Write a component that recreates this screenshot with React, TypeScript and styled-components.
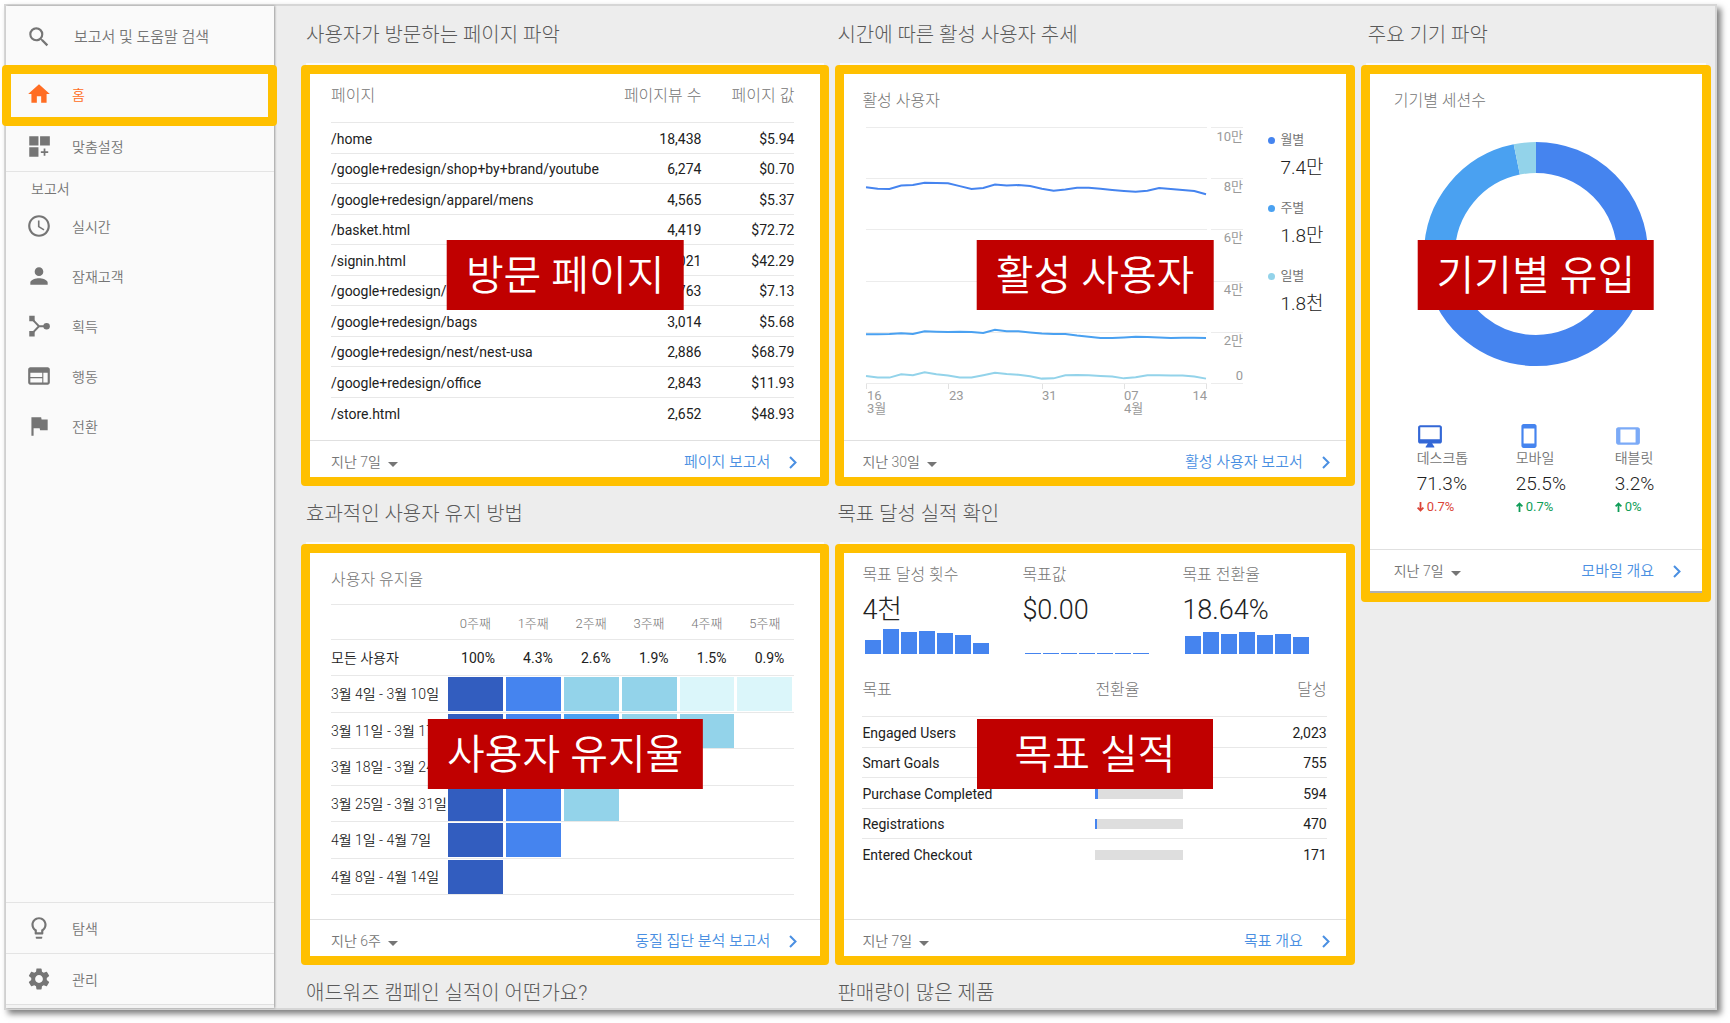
import React from "react";
import styled, { createGlobalStyle } from "styled-components";
import {
  MdSearch,
  MdHome,
  MdSchedule,
  MdPerson,
  MdWeb,
  MdFlag,
  MdLightbulbOutline,
  MdSettings,
  MdSmartphone,
  MdTablet,
} from "react-icons/md";

const color = {
  highlight: "#ffc000",
  tag: "#c00000",
  orange: "#ff6d23",
  muted: "#757575",
  line: "#e8e8e8",
  link: "#4a8fe2",
  navy: "#325dbf",
  blue: "#4584ef",
  sky: "#4aa1f1",
  pale: "#93d3ea",
  ice: "#dbf6fa",
};

const GlobalStyle = createGlobalStyle`
  *, *::before, *::after { box-sizing: border-box; }
  body {
    margin: 0;
    background: #fff;
    color: #212121;
    font-family: Roboto, "Noto Sans CJK KR", sans-serif;
    font-size: 14px;
  }
  h2, h3, p, ul, dl, dd { margin: 0; padding: 0; font-weight: inherit; }
  ul { list-style: none; }
  a { color: inherit; text-decoration: none; }
  svg { display: block; flex-shrink: 0; }
`;

/* ---------- frame ---------- */

const Page = styled.div`
  padding: 4px 13px 13px 4px;
`;

const Frame = styled.div`
  display: flex;
  min-height: calc(100vh - 17px);
  border: 2px solid #d6d6d6;
  background: #ededed;
  box-shadow: 4px 4px 6px rgba(0, 0, 0, 0.5);
`;

/* ---------- sidebar ---------- */

const Sidebar = styled.aside`
  position: relative;
  z-index: 1;
  display: flex;
  flex-direction: column;
  flex: 0 0 268px;
  background: #fafafa;
  color: ${color.muted};
  font-weight: 350;
  box-shadow: 1px 0 2px rgba(0, 0, 0, 0.35);
`;

const SearchBox = styled.label`
  display: flex;
  align-items: center;
  gap: 22px;
  height: 62px;
  padding-left: 20px;
`;

const SearchInput = styled.input`
  width: 160px;
  padding: 0;
  border: 0;
  outline: 0;
  background: none;
  color: ${color.muted};
  font: inherit;
  font-size: 15px;
  &::placeholder {
    color: ${color.muted};
    opacity: 1;
  }
`;

const NavLink = styled.a<{ $height: number; $active?: boolean }>`
  position: relative;
  display: flex;
  align-items: center;
  gap: 20px;
  height: ${(p) => p.$height}px;
  padding-left: 20px;
  color: ${(p) => (p.$active ? color.orange : "inherit")};
`;

const NavHighlight = styled.span`
  position: absolute;
  inset: -3px -3px -6px -4px;
  border: 9px solid ${color.highlight};
  border-radius: 4px;
`;

const NavGroup = styled.ul`
  border-bottom: 1px solid #e4e4e4;
`;

const NavHeading = styled.h2`
  padding: 5px 0 0 25px;
  font-size: 14px;
  line-height: 24px;
`;

const NavBottom = styled.ul`
  margin-top: auto;
  li {
    border-top: 1px solid #e4e4e4;
  }
`;

const NavEdge = styled.div`
  height: 4px;
  border-top: 1px solid #e0e0e0;
  background: #f3f3f3;
`;

/* ---------- dashboard grid ---------- */

const Main = styled.main`
  display: grid;
  grid-template-columns: 528fr 519fr 350fr;
  gap: 6px;
  flex: 1;
  min-width: 0;
  padding: 1px 4px 0 27px;
`;

const Column = styled.div<{ $inset: number }>`
  --inset: ${(p) => p.$inset}px;
  min-width: 0;
`;

const Title = styled.h2`
  padding: 14px 0 16px var(--inset);
  color: #5a5a5a;
  font-size: 20px;
  font-weight: 300;
  line-height: 28px;
  white-space: nowrap;
  &:last-child {
    padding-bottom: 0;
  }
`;

const Card = styled.section<{ $left: number; $right: number; $tall?: boolean }>`
  --left: ${(p) => p.$left}px;
  --right: ${(p) => p.$right}px;
  position: relative;
  display: flex;
  flex-direction: column;
  min-height: ${(p) => (p.$tall ? 537 : 421)}px;
  border: 9px solid ${color.highlight};
  border-radius: 4px;
  background: #fff;
  box-shadow: 0 -7px 0 -5px #fafafa;
`;

const CardBody = styled.div`
  flex: 1;
  padding: 0 var(--right) 0 var(--left);
`;

const CardTitle = styled.h3<{ $height: number }>`
  height: ${(p) => p.$height}px;
  padding-top: 17px;
  color: ${color.muted};
  font-size: 16px;
  font-weight: 300;
  line-height: 20px;
`;

const Tag = styled.div`
  position: absolute;
  top: 166px;
  left: 50%;
  min-width: 236px;
  height: 70px;
  padding: 0 19px;
  transform: translateX(-50%);
  background: ${color.tag};
  color: #fff;
  font-size: 41px;
  font-weight: 350;
  line-height: 72px;
  text-align: center;
  white-space: nowrap;
`;

const Footer = styled.footer<{ $edge?: boolean }>`
  display: flex;
  align-items: center;
  justify-content: space-between;
  padding: 11px calc(var(--right) - 3px) ${(p) => (p.$edge ? 10 : 5)}px var(--left);
  border-top: 1px solid #e0e0e0;
  border-bottom: ${(p) => (p.$edge ? "2px solid #b0b0b0" : "0")};
  font-weight: 350;
  line-height: 20px;
`;

const Period = styled.label`
  display: flex;
  align-items: center;
  gap: 7px;
  color: ${color.muted};
  svg {
    margin-top: 5px;
  }
`;

const PeriodSelect = styled.select`
  height: 20px;
  padding: 0;
  border: 0;
  appearance: none;
  field-sizing: content;
  background: none;
  color: inherit;
  font: inherit;
`;

const ReportLink = styled.a`
  display: flex;
  align-items: center;
  gap: 19px;
  color: ${color.link};
  font-size: 15px;
`;

/* ---------- tables ---------- */

const DataTable = styled.table<{ $offset?: number }>`
  width: 100%;
  margin-top: ${(p) => p.$offset ?? 0}px;
  border-spacing: 0;
  table-layout: fixed;
  line-height: 20px;

  th,
  td {
    padding: 0;
    border-bottom: 1px solid ${color.line};
    text-align: right;
    white-space: nowrap;
  }
  th:first-child,
  td:first-child,
  th.bar {
    text-align: left;
  }
  thead th {
    height: 49px;
    padding-top: 12px;
    color: ${color.muted};
    font-size: 16px;
    font-weight: 300;
    vertical-align: top;
  }
  tbody td {
    padding-top: 1px;
  }
  tbody tr {
    height: 30px;
  }
  tbody tr:nth-child(odd) {
    height: 31px;
  }
  tbody tr:last-child > * {
    border-bottom: 0;
  }
`;

const Track = styled.div`
  width: 88px;
  height: 10px;
  background: #dedede;
`;

const Fill = styled.div`
  height: 100%;
  background: ${color.blue};
`;

const CohortTable = styled.table`
  width: 100%;
  border-top: 1px solid ${color.line};
  border-spacing: 0;
  table-layout: fixed;
  line-height: 20px;

  th,
  td {
    padding: 0;
    border-bottom: 1px solid ${color.line};
    font-weight: 400;
    text-align: right;
    white-space: nowrap;
  }
  thead tr {
    height: 35px;
  }
  thead th {
    padding: 3px 14px 0 0;
    color: ${color.muted};
    font-size: 13px;
    font-weight: 300;
  }
  tbody tr {
    height: 37px;
  }
  tbody tr:nth-child(odd) {
    height: 36px;
  }
  tbody th {
    overflow: hidden;
    font-weight: 350;
    text-align: left;
  }
`;

const Share = styled.td`
  && {
    padding-right: 10px;
  }
`;

const Heat = styled.div<{ $tone: string }>`
  height: 34px;
  margin: 0 2px 0 1px;
  background: ${(p) => p.$tone};
`;

/* ---------- active users ---------- */

const ChartRow = styled.div`
  display: flex;
  gap: 25px;
`;

const Legend = styled.dl`
  display: flex;
  flex-direction: column;
  gap: 16px;
  padding-top: 10px;
`;

const LegendLabel = styled.dt<{ $tone: string }>`
  display: flex;
  align-items: center;
  gap: 5px;
  margin-bottom: 4px;
  color: ${color.muted};
  font-size: 13px;
  line-height: 20px;
  &::before {
    content: "";
    width: 7px;
    height: 7px;
    border-radius: 50%;
    background: ${(p) => p.$tone};
  }
`;

const LegendValue = styled.dd`
  padding-left: 12px;
  font-size: 19px;
  font-weight: 300;
  line-height: 28px;
`;

/* ---------- devices ---------- */

const DonutBox = styled.div`
  display: flex;
  justify-content: center;
`;

const Devices = styled.ul`
  display: grid;
  grid-template-columns: 99px 99px auto;
  margin: 56px 0 0 23px;
`;

const DeviceIcon = styled.div<{ $tone: string }>`
  color: ${(p) => p.$tone};
`;

const DeviceName = styled.p`
  color: ${color.muted};
  font-weight: 350;
  line-height: 18px;
`;

const DeviceShare = styled.p`
  margin: 4px 0 1px;
  font-size: 19px;
  font-weight: 300;
  line-height: 26px;
`;

const Delta = styled.p<{ $up: boolean }>`
  display: flex;
  align-items: center;
  gap: 3px;
  color: ${(p) => (p.$up ? "#0f9d58" : "#db4437")};
  font-size: 13px;
  line-height: 18px;
`;

/* ---------- goals ---------- */

const Stats = styled.div`
  display: grid;
  grid-template-columns: 160px 160px auto;
  padding-top: 12px;
`;

const StatLabel = styled.p`
  color: ${color.muted};
  font-size: 16px;
  font-weight: 300;
  line-height: 20px;
`;

const StatValue = styled.p`
  margin-top: 10px;
  font-size: 27px;
  font-weight: 300;
  line-height: 30px;
`;

const Bars = styled.div`
  display: flex;
  align-items: flex-end;
  gap: 2px;
  height: 29px;
  padding-left: 3px;
`;

const Bar = styled.div`
  width: 16px;
  background: ${color.blue};
`;

/* ---------- drawings ---------- */

const CustomizeIcon = () => (
  <svg width="26" height="26" viewBox="0 0 24 24" fill="currentColor" aria-hidden="true">
    <path d="M3 3h8.500v8.500H3zM13 3h9v8.500h-9zM3 13.200h8.500V22H3zM16.300 14.200h1.600v2.600h2.600v1.600h-2.600V21h-1.600v-2.600h-2.600v-1.600h2.600z" />
  </svg>
);

const AcquisitionIcon = () => (
  <svg width="26" height="26" viewBox="0 0 24 24" aria-hidden="true">
    <path d="M5 5l7 7.200L5 19.500M12 12.200h7" fill="none" stroke="currentColor" strokeWidth="1.800" />
    <path d="M3 2.500h5v5H3zM3 16.700h5v5H3z" fill="currentColor" />
    <circle cx="19" cy="12.200" r="3" fill="currentColor" />
  </svg>
);

const DesktopIcon = ({ size }: { size: number }) => (
  <svg width={size} height={size} viewBox="0 0 24 24" fill="currentColor" aria-hidden="true">
    <path
      fillRule="evenodd"
      d="M21 2H3c-1.100 0-2 .9-2 2v13c0 1.100.9 2 2 2h7l-2 3v.5h8V22l-2-3h7c1.100 0 2-.9 2-2V4c0-1.100-.9-2-2-2zM3 4h18v11H3z"
    />
  </svg>
);

const Caret = () => (
  <svg width="10" height="5" viewBox="0 0 10 5" fill="currentColor" aria-hidden="true">
    <path d="M0 0h10L5 5z" />
  </svg>
);

const Chevron = () => (
  <svg width="8" height="13" viewBox="0 0 8 13" fill="none" stroke="currentColor" strokeWidth="2" aria-hidden="true">
    <path d="M1 1l5.500 5.500L1 12" />
  </svg>
);

const DeltaArrow = ({ up }: { up: boolean }) => (
  <svg width="7" height="10" viewBox="0 0 7 10" fill="none" stroke="currentColor" strokeWidth="1.800" aria-hidden="true">
    {up ? <path d="M3.500 10V1.500M.6 4.300l2.900-2.900 2.900 2.900" /> : <path d="M3.500 0v8.500M.6 5.700l2.900 2.900 2.900-2.900" />}
  </svg>
);

const monthly = [76.9, 76.3, 76.2, 77.5, 77.7, 78.6, 78.5, 78.4, 77.3, 76.2, 76.6, 77.9, 77.5, 77.7, 77.3, 76.3, 75.5, 76, 76.7, 76.7, 76.3, 75.8, 75.4, 75.1, 75.5, 76.6, 76.2, 75.8, 75.4, 74.1];
const weekly = [19.4, 19.4, 19.5, 19.8, 19.5, 20.6, 20.4, 20.3, 20.4, 20.3, 19.9, 21.2, 20.6, 20.6, 20.1, 19.7, 19.5, 19.5, 18.9, 18.5, 18, 18, 18.2, 18.5, 18.4, 18.2, 18, 18.1, 18.1, 18];
const daily = [3.1, 2.5, 2.5, 3.8, 3.4, 4.6, 3.8, 3.3, 2.5, 2.5, 3.4, 4.4, 3.9, 3.6, 3, 2.1, 2.2, 3.4, 3.5, 3.4, 3.1, 2.9, 2.2, 2.6, 3.4, 3.4, 3.3, 3.3, 2.9, 2.1];

const series = [
  { name: "월별", value: "7.4만", tone: color.blue, points: monthly },
  { name: "주별", value: "1.8만", tone: color.sky, points: weekly },
  { name: "일별", value: "1.8천", tone: color.pale, points: daily },
];

const plot = { left: 4, right: 344, top: 8, bottom: 264 };
const plotX = (i: number) => plot.left + (i * (plot.right - plot.left)) / 29;
const plotY = (v: number) => plot.bottom - (v * (plot.bottom - plot.top)) / 100;

const ActiveUsersChart = () => (
  <svg width="381" height="300" viewBox="0 0 381 300" role="img" aria-label="활성 사용자 추세">
    {[100, 80, 60, 40, 20, 0].map((v) => (
      <path
        key={v}
        d={`M${plot.left} ${Math.round(plotY(v)) - 0.5}H${plot.right + 1}M${plot.right + 5} ${Math.round(plotY(v)) - 0.5}H381`}
        stroke="#ececec"
      />
    ))}
    {[0, 7, 15, 22, 29].map((i) => (
      <path key={i} d={`M${Math.round(plotX(i)) + 0.5} ${plot.bottom}v5`} stroke="#e2e2e2" />
    ))}
    {series.map((s) => (
      <polyline
        key={s.name}
        points={s.points.map((v, i) => `${plotX(i)},${plotY(v)}`).join(" ")}
        fill="none"
        stroke={s.tone}
        strokeWidth="2"
      />
    ))}
    <g fill="#9a9a9a" fontSize="13" textAnchor="end">
      <text x="381" y="21">10만</text>
      <text x="381" y="71">8만</text>
      <text x="381" y="122">6만</text>
      <text x="381" y="174">4만</text>
      <text x="381" y="225">2만</text>
      <text x="381" y="260">0</text>
      <text x="345" y="280">14</text>
    </g>
    <g fill="#9a9a9a" fontSize="13">
      <text x="5" y="280">16</text>
      <text x="5" y="293">3월</text>
      <text x="87" y="280">23</text>
      <text x="180" y="280">31</text>
      <text x="262" y="280">07</text>
      <text x="262" y="293">4월</text>
    </g>
  </svg>
);

const slices = [
  { share: 71.3, tone: color.blue },
  { share: 25.5, tone: color.sky },
  { share: 3.2, tone: color.pale },
];

const DeviceDonut = () => {
  let start = 0;
  return (
    <svg width="226" height="226" viewBox="0 0 226 226" role="img" aria-label="기기별 세션수">
      <g fill="none" strokeWidth="31" transform="rotate(-90 113 113)">
        {slices.map((s) => {
          const offset = -start;
          start += s.share;
          return (
            <circle
              key={s.tone}
              cx="113"
              cy="113"
              r="96.500"
              pathLength="100"
              stroke={s.tone}
              strokeDasharray={`${s.share} ${100 - s.share}`}
              strokeDashoffset={offset}
            />
          );
        })}
      </g>
    </svg>
  );
};

/* ---------- data ---------- */

const pages = [
  ["/home", "18,438", "$5.94"],
  ["/google+redesign/shop+by+brand/youtube", "6,274", "$0.70"],
  ["/google+redesign/apparel/mens", "4,565", "$5.37"],
  ["/basket.html", "4,419", "$72.72"],
  ["/signin.html", "4,021", "$42.29"],
  ["/google+redesign/apparel", "3,763", "$7.13"],
  ["/google+redesign/bags", "3,014", "$5.68"],
  ["/google+redesign/nest/nest-usa", "2,886", "$68.79"],
  ["/google+redesign/office", "2,843", "$11.93"],
  ["/store.html", "2,652", "$48.93"],
];

const cohorts: { range: string; tones: string[] }[] = [
  { range: "3월 4일 - 3월 10일", tones: [color.navy, color.blue, color.pale, color.pale, color.ice, color.ice] },
  { range: "3월 11일 - 3월 17일", tones: [color.navy, color.blue, color.sky, color.pale, color.pale] },
  { range: "3월 18일 - 3월 24일", tones: [color.navy, color.blue, color.pale, color.pale] },
  { range: "3월 25일 - 3월 31일", tones: [color.navy, color.blue, color.pale] },
  { range: "4월 1일 - 4월 7일", tones: [color.navy, color.blue] },
  { range: "4월 8일 - 4월 14일", tones: [color.navy] },
];

const stats = [
  { label: "목표 달성 횟수", value: "4천", bars: [14, 25, 22, 23, 21, 19, 11] },
  { label: "목표값", value: "$0.00", bars: [1, 1, 1, 1, 1, 1, 1] },
  { label: "목표 전환율", value: "18.64%", bars: [18, 22, 20, 22, 19, 20, 17] },
];

const goals = [
  { name: "Engaged Users", rate: 11, count: "2,023" },
  { name: "Smart Goals", rate: 4, count: "755" },
  { name: "Purchase Completed", rate: 3, count: "594" },
  { name: "Registrations", rate: 2, count: "470" },
  { name: "Entered Checkout", rate: 0, count: "171" },
];

const devices = [
  { name: "데스크톱", share: "71.3%", delta: "0.7%", up: false, tone: "#3367d6", Icon: DesktopIcon },
  { name: "모바일", share: "25.5%", delta: "0.7%", up: true, tone: color.blue, Icon: MdSmartphone },
  { name: "태블릿", share: "3.2%", delta: "0%", up: true, tone: "#7baaf7", Icon: MdTablet },
];

const reportLinks = [
  { label: "실시간", Icon: MdSchedule },
  { label: "잠재고객", Icon: MdPerson },
  { label: "획득", Icon: AcquisitionIcon },
  { label: "행동", Icon: MdWeb },
  { label: "전환", Icon: MdFlag },
];

const CardFooter = ({ period, link, edge }: { period: string; link: string; edge?: boolean }) => (
  <Footer $edge={edge}>
    <Period>
      <PeriodSelect aria-label="기간" defaultValue={period}>
        <option>{period}</option>
      </PeriodSelect>
      <Caret />
    </Period>
    <ReportLink href="#">
      {link}
      <Chevron />
    </ReportLink>
  </Footer>
);

export default function App() {
  return (
    <Page>
      <GlobalStyle />
      <Frame>
        <Sidebar>
          <SearchBox>
            <MdSearch size={26} />
            <SearchInput type="text" placeholder="보고서 및 도움말 검색" aria-label="보고서 및 도움말 검색" />
          </SearchBox>
          <NavGroup>
            <li>
              <NavLink href="#" $height={52} $active>
                <MdHome size={26} />홈
                <NavHighlight />
              </NavLink>
            </li>
            <li>
              <NavLink href="#" $height={51}>
                <CustomizeIcon />
                맞춤설정
              </NavLink>
            </li>
          </NavGroup>
          <NavHeading>보고서</NavHeading>
          <ul>
            {reportLinks.map(({ label, Icon }) => (
              <li key={label}>
                <NavLink href="#" $height={50}>
                  <Icon size={26} />
                  {label}
                </NavLink>
              </li>
            ))}
          </ul>
          <NavBottom>
            <li>
              <NavLink href="#" $height={50}>
                <MdLightbulbOutline size={26} />
                탐색
              </NavLink>
            </li>
            <li>
              <NavLink href="#" $height={50}>
                <MdSettings size={26} />
                관리
              </NavLink>
            </li>
          </NavBottom>
          <NavEdge />
        </Sidebar>

        <Main>
          <Column $inset={5}>
            <Title>사용자가 방문하는 페이지 파악</Title>
            <Card $left={21} $right={26}>
              <CardBody>
                <DataTable>
                  <colgroup>
                    <col />
                    <col width="90" />
                    <col width="93" />
                  </colgroup>
                  <thead>
                    <tr>
                      <th>페이지</th>
                      <th>페이지뷰 수</th>
                      <th>페이지 값</th>
                    </tr>
                  </thead>
                  <tbody>
                    {pages.map(([path, views, value]) => (
                      <tr key={path}>
                        <td>{path}</td>
                        <td>{views}</td>
                        <td>{value}</td>
                      </tr>
                    ))}
                  </tbody>
                </DataTable>
              </CardBody>
              <CardFooter period="지난 7일" link="페이지 보고서" />
              <Tag>방문 페이지</Tag>
            </Card>

            <Title>효과적인 사용자 유지 방법</Title>
            <Card $left={21} $right={26}>
              <CardBody>
                <CardTitle $height={51}>사용자 유지율</CardTitle>
                <CohortTable>
                  <colgroup>
                    <col width="116" />
                    <col span={6} />
                  </colgroup>
                  <thead>
                    <tr>
                      <th />
                      {[0, 1, 2, 3, 4, 5].map((week) => (
                        <th key={week}>{`${week}주째`}</th>
                      ))}
                    </tr>
                  </thead>
                  <tbody>
                    <tr>
                      <th>모든 사용자</th>
                      {["100%", "4.3%", "2.6%", "1.9%", "1.5%", "0.9%"].map((share) => (
                        <Share key={share}>{share}</Share>
                      ))}
                    </tr>
                    {cohorts.map(({ range, tones }) => (
                      <tr key={range}>
                        <th>{range}</th>
                        {[0, 1, 2, 3, 4, 5].map((week) => (
                          <td key={week}>{tones[week] && <Heat $tone={tones[week]} />}</td>
                        ))}
                      </tr>
                    ))}
                  </tbody>
                </CohortTable>
              </CardBody>
              <CardFooter period="지난 6주" link="동질 집단 분석 보고서" />
              <Tag>사용자 유지율</Tag>
            </Card>
            <Title>애드워즈 캠페인 실적이 어떤가요?</Title>
          </Column>

          <Column $inset={2}>
            <Title>시간에 따른 활성 사용자 추세</Title>
            <Card $left={18} $right={19}>
              <CardBody>
                <CardTitle $height={46}>활성 사용자</CardTitle>
                <ChartRow>
                  <ActiveUsersChart />
                  <Legend>
                    {series.map((s) => (
                      <div key={s.name}>
                        <LegendLabel $tone={s.tone}>{s.name}</LegendLabel>
                        <LegendValue>{s.value}</LegendValue>
                      </div>
                    ))}
                  </Legend>
                </ChartRow>
              </CardBody>
              <CardFooter period="지난 30일" link="활성 사용자 보고서" />
              <Tag>활성 사용자</Tag>
            </Card>

            <Title>목표 달성 실적 확인</Title>
            <Card $left={18} $right={19}>
              <CardBody>
                <Stats>
                  {stats.map((s) => (
                    <div key={s.label}>
                      <StatLabel>{s.label}</StatLabel>
                      <StatValue>{s.value}</StatValue>
                      <Bars>
                        {s.bars.map((height, i) => (
                          <Bar key={i} style={{ height }} />
                        ))}
                      </Bars>
                    </div>
                  ))}
                </Stats>
                <DataTable $offset={14}>
                  <colgroup>
                    <col width="233" />
                    <col width="110" />
                    <col />
                  </colgroup>
                  <thead>
                    <tr>
                      <th>목표</th>
                      <th className="bar">전환율</th>
                      <th>달성</th>
                    </tr>
                  </thead>
                  <tbody>
                    {goals.map((goal) => (
                      <tr key={goal.name}>
                        <td>{goal.name}</td>
                        <td>
                          <Track>
                            <Fill style={{ width: `${goal.rate}%` }} />
                          </Track>
                        </td>
                        <td>{goal.count}</td>
                      </tr>
                    ))}
                  </tbody>
                </DataTable>
              </CardBody>
              <CardFooter period="지난 7일" link="목표 개요" />
              <Tag>목표 실적</Tag>
            </Card>
            <Title>판매량이 많은 제품</Title>
          </Column>

          <Column $inset={7}>
            <Title>주요 기기 파악</Title>
            <Card $left={24} $right={24} $tall>
              <CardBody>
                <CardTitle $height={67}>기기별 세션수</CardTitle>
                <DonutBox>
                  <DeviceDonut />
                </DonutBox>
                <Devices>
                  {devices.map(({ name, share, delta, up, tone, Icon }) => (
                    <li key={name}>
                      <DeviceIcon $tone={tone}>
                        <Icon size={26} />
                      </DeviceIcon>
                      <DeviceName>{name}</DeviceName>
                      <DeviceShare>{share}</DeviceShare>
                      <Delta $up={up}>
                        <DeltaArrow up={up} />
                        {delta}
                      </Delta>
                    </li>
                  ))}
                </Devices>
              </CardBody>
              <CardFooter period="지난 7일" link="모바일 개요" edge />
              <Tag>기기별 유입</Tag>
            </Card>
          </Column>
        </Main>
      </Frame>
    </Page>
  );
}
